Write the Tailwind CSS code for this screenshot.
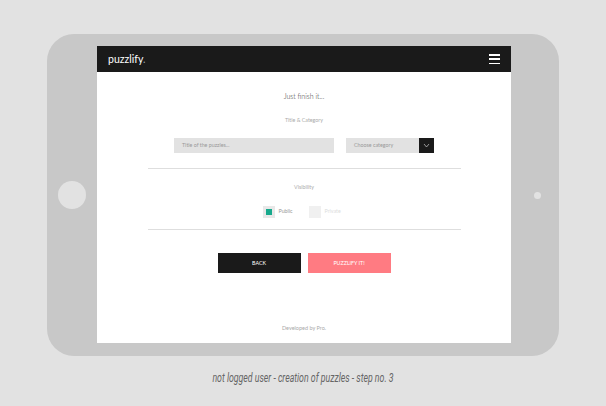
<!doctype html>
<html>
<head>
<meta charset="utf-8">
<script src="https://cdn.jsdelivr.net/npm/@tailwindcss/browser@4"></script>
<title>puzzlify</title>
</head>
<body class="bg-[#e2e2e2] font-['Lato',sans-serif] w-[606px] h-[406px] overflow-hidden">
  <div class="pt-[34px] pl-[47px]">
    <!-- Tablet -->
    <div class="flex w-[512px] h-[322px] rounded-[27px] bg-[#c8c8c8]">
      <div class="w-[50px] flex items-center justify-center">
        <div class="w-[28px] h-[28px] rounded-full bg-[#e2e2e2]"></div>
      </div>
      <div class="w-[414px] h-[297px] mt-[12px] bg-white flex flex-col">
        <!-- Nav -->
        <div class="h-[26px] bg-[#1a1a1a] flex items-center justify-between pl-[11px] pr-[11px]">
          <span class="text-[10.5px] text-white leading-none">puzzlify<span class="text-gray-400">.</span></span>
          <div class="flex flex-col gap-[2.75px]">
            <div class="w-[11px] h-[1.5px] bg-white"></div>
            <div class="w-[11px] h-[1.5px] bg-white"></div>
            <div class="w-[11px] h-[1.5px] bg-white"></div>
          </div>
        </div>
        <!-- Form -->
        <div class="flex-1 flex flex-col items-center">
          <p class="mt-[18px] text-[7px] font-light leading-[12px] text-[#333]">Just finish it...</p>
          <p class="mt-[14px] text-[5.3px] leading-[8px] text-[#aaa]">Title &amp; Category</p>
          <div class="mt-[14px] flex">
            <div class="w-[160px] h-[15px] bg-[#e2e2e2] flex items-center pl-[8px] text-[5.3px] text-[#999]">Title of the puzzles...</div>
            <div class="ml-[12px] w-[73px] h-[15px] bg-[#e2e2e2] flex items-center pl-[8px] text-[5.3px] text-[#999]">Choose category</div>
            <div class="w-[15px] h-[15px] bg-[#1a1a1a] flex items-center justify-center">
              <svg width="7" height="5" viewBox="0 0 7 5" fill="none" stroke="#ccc" stroke-width="0.7"><path d="M1 1l2.5 3L6 1"/></svg>
            </div>
          </div>
          <div class="mt-[15px] w-[313px] h-px bg-[#dedede]"></div>
          <p class="mt-[14px] text-[5.3px] leading-[8px] text-[#aaa]">Visibility</p>
          <div class="mt-[15px] mr-[5px] flex items-center">
            <div class="w-[12px] h-[12px] bg-[#e8e8e8] flex items-center justify-center">
              <div class="w-[6px] h-[6px] bg-[#17a98c]"></div>
            </div>
            <span class="ml-[4px] w-[14px] text-[5.3px] text-[#999]">Public</span>
            <div class="ml-[16px] w-[12px] h-[12px] bg-[#f0f0f0]"></div>
            <span class="ml-[4px] w-[16px] text-[5.3px] text-[#ddd]">Private</span>
          </div>
          <div class="mt-[11px] w-[313px] h-px bg-[#dedede]"></div>
          <div class="mt-[23px] flex gap-[7px]">
            <button class="w-[83px] h-[20px] pt-px bg-[#1a1a1a] text-white text-[5.3px]">BACK</button>
            <button class="w-[83px] h-[20px] pt-px bg-[#ff7b82] text-white text-[5.3px]">PUZZLIFY IT!</button>
          </div>
          <p class="mt-auto mb-[11px] text-[5.5px] leading-[8px] text-[#aaa]">Developed by Pro.</p>
        </div>
      </div>
      <div class="flex-1 flex items-center justify-center pl-[5px]">
        <div class="w-[7px] h-[7px] rounded-full bg-[#e2e2e2]"></div>
      </div>
    </div>
  </div>
  <p class="mt-[15px] text-center font-['Roboto',sans-serif] italic text-[12px] leading-[14px] text-[#666] scale-x-[.73]">not logged user - creation of puzzles - step no. 3</p>
</body>
</html>
